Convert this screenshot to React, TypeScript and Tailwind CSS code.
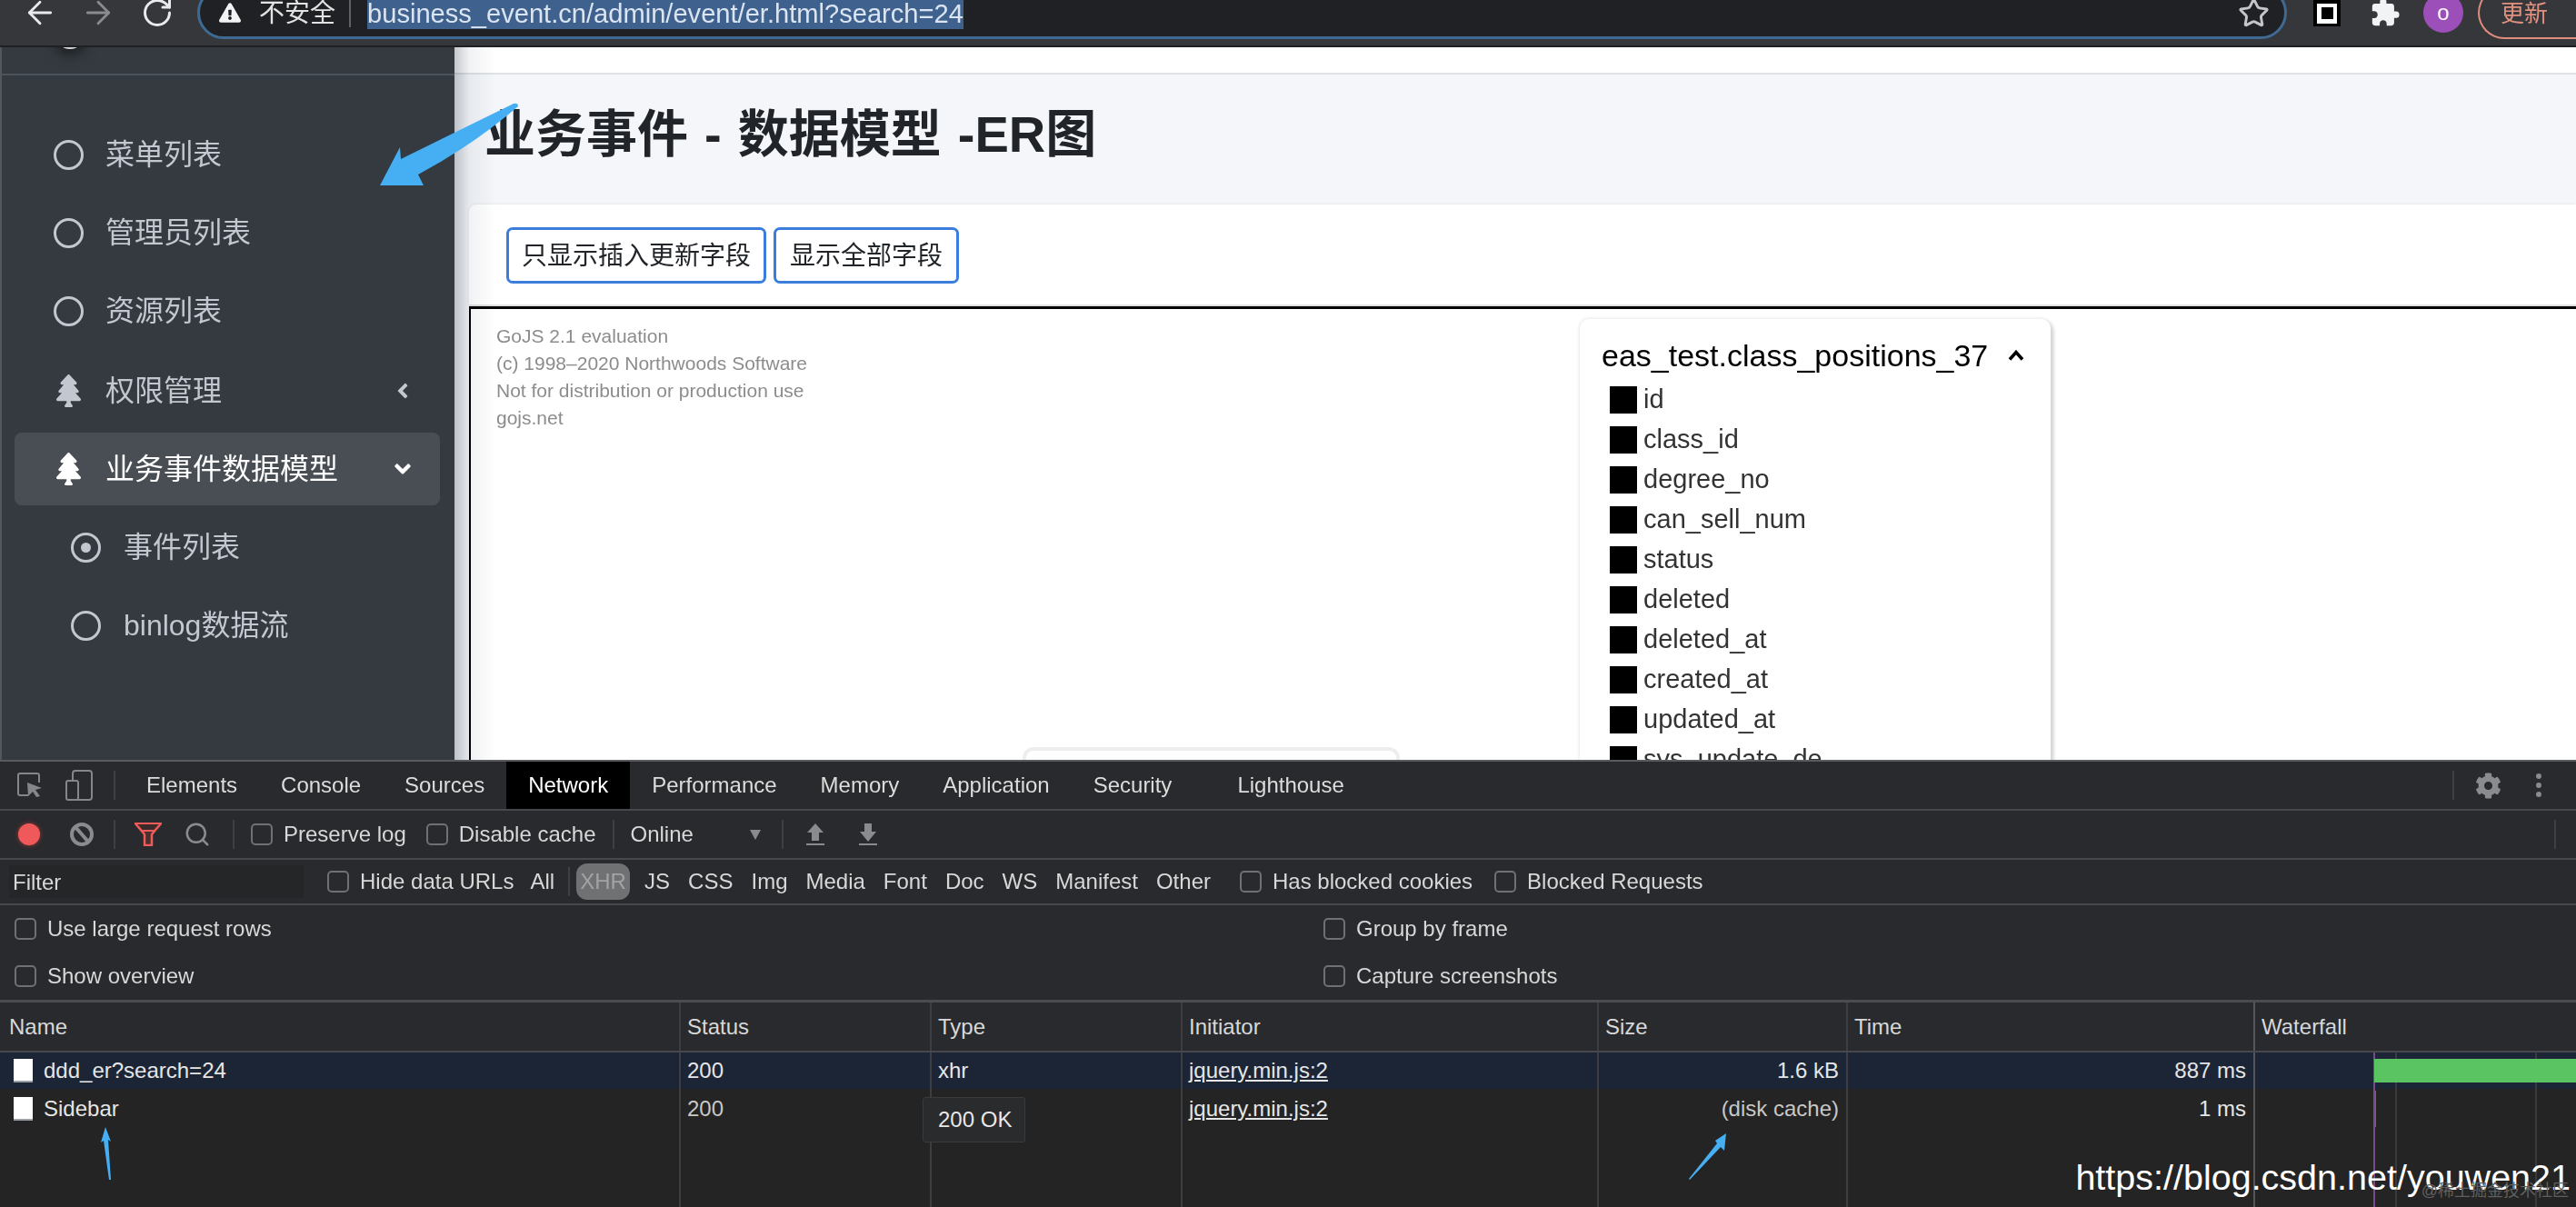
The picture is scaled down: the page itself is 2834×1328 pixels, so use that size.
import { ArrowLeft, ArrowRight, RotateCw, Star, Search } from "lucide-react";
import { FaTree, FaAngleLeft, FaAngleDown, FaCog, FaExclamationTriangle } from "react-icons/fa";
import { MdExtension } from "react-icons/md";

const COLS = "grid grid-cols-[747px_276px_276px_458px_274px_448px_1fr]";
const FIELDS = [
  "id",
  "class_id",
  "degree_no",
  "can_sell_num",
  "status",
  "deleted",
  "deleted_at",
  "created_at",
  "updated_at",
  "sys_update_de",
];

function Ring({ dot }: { dot?: boolean }) {
  return (
    <span className="flex h-[33px] w-[33px] shrink-0 items-center justify-center rounded-full border-[3px] border-[#c2c7d0]">
      {dot && <span className="h-[11px] w-[11px] rounded-full bg-[#c2c7d0]" />}
    </span>
  );
}

function NavItem({ label }: { label: string }) {
  return (
    <div className="mb-[6px] flex h-[80px] items-center gap-[24px] pl-[43px] text-[32px] text-[#c2c7d0]">
      <Ring />
      <span>{label}</span>
    </div>
  );
}

function SubItem({ label, dot }: { label: string; dot?: boolean }) {
  return (
    <div className="mb-[6px] flex h-[80px] items-center gap-[25px] pl-[62px] text-[32px] text-[#c2c7d0]">
      <Ring dot={dot} />
      <span>{label}</span>
    </div>
  );
}

function Sidebar() {
  return (
    <aside className="h-full w-[500px] shrink-0 border-l-2 border-[#55565a] bg-[#343a40]">
      <div className="relative h-[31px] overflow-hidden border-b-2 border-[#4b545c]">
        <div className="absolute left-[58px] top-[-32px] h-[34px] w-[34px] rounded-full bg-[#d8d8d8] shadow-[0_6px_14px_rgba(0,0,0,0.5)]" />
      </div>
      <nav className="ml-[14px] mr-[16px] flex flex-col pt-[47px]">
        <NavItem label="菜单列表" />
        <NavItem label="管理员列表" />
        <NavItem label="资源列表" />
        <div className="mb-[6px] mt-[2px] flex h-[80px] items-center pl-[46px] pr-[33px] text-[32px] text-[#c2c7d0]">
          <FaTree className="h-[36px] w-[27px]" />
          <span className="ml-[27px]">权限管理</span>
          <FaAngleLeft className="ml-auto h-[26px] w-[16px]" />
        </div>
        <div className="mb-[6px] flex h-[80px] items-center rounded-[8px] bg-[#494e54] pl-[46px] pr-[30px] text-[32px] text-white">
          <FaTree className="h-[36px] w-[27px]" />
          <span className="ml-[27px]">业务事件数据模型</span>
          <FaAngleDown className="ml-auto h-[28px] w-[22px]" />
        </div>
        <SubItem label="事件列表" dot />
        <SubItem label="binlog数据流" />
      </nav>
    </aside>
  );
}

function BrowserBar() {
  return (
    <header className="flex h-[52px] items-start border-b-2 border-[#1f2023] bg-[#36373b] text-[#e8eaed]">
      <ArrowLeft className="ml-[24px] mt-[-6px] h-[40px] w-[40px] shrink-0 text-[#e8eaed]" strokeWidth={1.7} />
      <ArrowRight className="ml-[24px] mt-[-6px] h-[40px] w-[40px] shrink-0 text-[#8a8b8e]" strokeWidth={1.7} />
      <RotateCw className="ml-[27px] mt-[-4px] h-[36px] w-[36px] shrink-0 text-[#e8eaed]" strokeWidth={2} />
      <div className="ml-[26px] mt-[-15px] flex h-[58px] w-[2299px] shrink-0 items-center rounded-full border-[3px] border-[#3f6a94] bg-[#202124] pl-[21px] pr-[16px]">
        <FaExclamationTriangle className="h-[24px] w-[24px] text-[#f1f3f4]" />
        <span className="ml-[20px] mt-[2px] text-[28px] text-[#e3e3e3]">不安全</span>
        <span className="ml-[15px] mb-[10px] h-[30px] w-[2px] self-end bg-[#5f6368]" />
        <span className="ml-[18px] h-[44px] self-start bg-[#3f618e] pt-[10px] text-[29.1px] leading-[34px] text-[#dbe5f1]">
          business_event.cn/admin/event/er.html?search=24
        </span>
        <Star className="ml-auto h-[35px] w-[35px] text-[#c4c6c9]" strokeWidth={2} />
      </div>
      <div className="ml-[29px] flex h-[29px] w-[30px] shrink-0 items-center justify-center bg-black">
        <div className="flex h-[22px] w-[22px] items-center justify-center bg-white">
          <div className="h-[13px] w-[13px] bg-black" />
        </div>
      </div>
      <MdExtension className="ml-[32px] mt-[-3px] h-[34px] w-[34px] shrink-0 text-[#f1f3f4]" />
      <div className="ml-[25px] mt-[-8px] flex h-[44px] w-[44px] shrink-0 items-center justify-center rounded-full bg-[#9c4fb8] text-[24px] text-white">
        o
      </div>
      <div className="ml-[16px] mt-[-15px] h-[58px] w-[140px] shrink-0 rounded-l-full border-2 border-r-0 border-[#df8d7c] pl-[23px] pt-[11px] text-[26px] leading-[34px] text-[#e0917f]">
        更新
      </div>
    </header>
  );
}

function Content() {
  return (
    <main className="relative flex h-full min-w-0 flex-1 flex-col bg-[#f4f6f9]">
      <div className="h-[30px] shrink-0 border-b-2 border-[#dee2e6] bg-white" />
      <div className="flex h-[143px] shrink-0 items-start pl-[33px] pt-[37px]">
        <h1 className="text-[56px] font-semibold leading-[58px] text-[#212529] [word-spacing:2.5px]">
          业务事件 - 数据模型 -ER图
        </h1>
      </div>
      <div className="ml-[16px] flex h-[112px] shrink-0 items-start gap-[8px] rounded-tl-[8px] border-b-2 border-[#e0e0e0] bg-white pl-[41px] pt-[25px] shadow-[0_0_3px_rgba(0,0,0,0.1)]">
        <button className="h-[62px] w-[286px] rounded-[7px] border-[3px] border-[#3b7ddb] bg-white pt-[2px] text-[28px] text-[#212529]">
          只显示插入更新字段
        </button>
        <button className="h-[62px] w-[204px] rounded-[7px] border-[3px] border-[#3b7ddb] bg-white pt-[2px] text-[28px] text-[#212529]">
          显示全部字段
        </button>
      </div>
      <section className="relative ml-[16px] min-h-0 flex-1 overflow-hidden border-l-2 border-t-[3px] border-black bg-white">
        <div className="pl-[28px] pt-[15px] text-[21px] leading-[30px] text-[#8c8c8c]">
          <div>GoJS 2.1 evaluation</div>
          <div>(c) 1998–2020 Northwoods Software</div>
          <div>Not for distribution or production use</div>
          <div>gojs.net</div>
        </div>
        <div className="absolute left-[1220px] top-[11px] h-[520px] w-[518px] rounded-[10px] bg-white shadow-[0_0_4px_#dddddd,3px_3px_4px_rgba(0,0,0,0.2)]">
          <div className="flex h-[67px] items-start pl-[24px] pt-[16px]">
            <span className="text-[34px] leading-[48px] text-black">eas_test.class_positions_37</span>
            <svg className="ml-[22px] mt-[18px] h-[12px] w-[18px]" viewBox="0 0 18 12" fill="none">
              <path d="M2 10.5L9 2.5l7 8" stroke="black" strokeWidth="3.5" />
            </svg>
          </div>
          {FIELDS.map((f) => (
            <div key={f} className="flex h-[44px] items-center gap-[7px] pl-[33px] text-[29px] text-[#333333]">
              <span className="h-[30px] w-[30px] bg-black" />
              <span>{f}</span>
            </div>
          ))}
        </div>
        <div className="absolute left-[607px] top-[482px] h-[40px] w-[415px] rounded-[12px] border-4 border-[#eeeeee]" />
      </section>
      <div className="pointer-events-none absolute bottom-0 left-0 top-0 w-[46px] bg-gradient-to-r from-[#c6c8cd] via-[#f1f2f4] via-35% to-transparent mix-blend-multiply" />
    </main>
  );
}

function Check({ label, className }: { label: string; className?: string }) {
  return (
    <span className={`flex items-center gap-[12px] ${className ?? ""}`}>
      <span className="h-[24px] w-[24px] shrink-0 rounded-[5px] border-2 border-[#6f7072]" />
      <span>{label}</span>
    </span>
  );
}

function Sep({ className }: { className?: string }) {
  return <span className={`h-[32px] w-[2px] shrink-0 bg-[#3f4043] ${className ?? ""}`} />;
}

function TabBar() {
  const tabs = ["Elements", "Console", "Sources", "Network", "Performance", "Memory", "Application", "Security"];
  return (
    <div className="flex h-[54px] shrink-0 items-center border-b-2 border-[#47484b]">
      <svg className="ml-[19px] h-[28px] w-[28px] shrink-0" viewBox="0 0 28 28" fill="none">
        <path d="M12 25H3a2 2 0 0 1-2-2V3a2 2 0 0 1 2-2h19a2 2 0 0 1 2 2v8" stroke="#85868a" strokeWidth="2" />
        <path d="M11 11l16 6-7 2 5 7-4 1-4-6-5 5z" fill="#85868a" />
      </svg>
      <svg className="ml-[25px] h-[34px] w-[30px] shrink-0" viewBox="0 0 30 34" fill="none">
        <rect x="8" y="1" width="21" height="32" rx="3" stroke="#85868a" strokeWidth="2" />
        <rect x="1" y="12" width="13" height="21" rx="2" fill="#292a2d" stroke="#85868a" strokeWidth="2" />
      </svg>
      <Sep className="ml-[23px] mr-[10px]" />
      {tabs.map((t) => (
        <span
          key={t}
          className={`flex h-full items-center px-[24px] text-[24px] ${t === "Network" ? "bg-black text-white" : "text-[#dcdcdc]"}`}
        >
          {t}
        </span>
      ))}
      <span className="ml-[24px] flex h-full items-center px-[24px] text-[24px] text-[#dcdcdc]">Lighthouse</span>
      <Sep className="ml-auto" />
      <FaCog className="ml-[23px] h-[29px] w-[29px] text-[#8a8b8e]" />
      <span className="ml-[38px] mr-[38px] flex flex-col gap-[4px]">
        <span className="h-[6px] w-[6px] rounded-full bg-[#8a8b8e]" />
        <span className="h-[6px] w-[6px] rounded-full bg-[#8a8b8e]" />
        <span className="h-[6px] w-[6px] rounded-full bg-[#8a8b8e]" />
      </span>
    </div>
  );
}

function ToolRow() {
  return (
    <div className="flex h-[54px] shrink-0 items-center border-b-2 border-[#47484b] pr-[22px]">
      <span className="ml-[20px] h-[24px] w-[24px] rounded-full bg-[#f0595a] shadow-[0_0_5px_#a03a3a]" />
      <svg className="ml-[33px] h-[26px] w-[26px]" viewBox="0 0 26 26" fill="none">
        <circle cx="13" cy="13" r="11" stroke="#8a8b8e" strokeWidth="4" />
        <path d="M6 5l14 16" stroke="#8a8b8e" strokeWidth="4" />
      </svg>
      <Sep className="ml-[22px]" />
      <svg className="ml-[21px] h-[26px] w-[30px]" viewBox="0 0 30 26">
        <path d="M1 1h28L19 13v12h-8V13z" fill="#4a2f2f" stroke="#ef5a5a" strokeWidth="2.5" strokeLinejoin="round" />
        <path d="M1 1h28l-7 8H8z" fill="#3a2a2a" stroke="#ef5a5a" strokeWidth="2" />
      </svg>
      <Search className="ml-[24px] h-[30px] w-[30px] text-[#8a8b8e]" strokeWidth={2} />
      <Sep className="ml-[24px]" />
      <Check label="Preserve log" className="ml-[18px]" />
      <Check label="Disable cache" className="ml-[22px]" />
      <Sep className="ml-[19px]" />
      <span className="ml-[17px]">Online</span>
      <span className="ml-[62px] h-0 w-0 border-x-[6px] border-t-[11px] border-x-transparent border-t-[#8a8b8e]" />
      <Sep className="ml-[23px]" />
      <svg className="ml-[24px] h-[26px] w-[22px]" viewBox="0 0 22 26">
        <path d="M11 1l9 10h-5v9H7v-9H2z" fill="#8a8b8e" />
        <rect x="1" y="23" width="20" height="2" fill="#8a8b8e" />
      </svg>
      <svg className="ml-[36px] h-[26px] w-[22px]" viewBox="0 0 22 26">
        <path d="M7 1h8v9h5l-9 11L2 10h5z" fill="#8a8b8e" />
        <rect x="1" y="23" width="20" height="2" fill="#8a8b8e" />
      </svg>
      <Sep className="ml-auto" />
    </div>
  );
}

function FilterRow() {
  return (
    <div className="flex h-[50px] shrink-0 items-center border-b-2 border-[#47484b]">
      <div className="ml-[10px] flex h-[36px] w-[324px] items-center bg-[#252628] pl-[4px] pt-[2px]">Filter</div>
      <Check label="Hide data URLs" className="ml-[26px]" />
      <span className="ml-[18px]">All</span>
      <Sep className="ml-[15px]" />
      <span className="ml-[7px] flex h-[40px] w-[59px] items-center justify-center rounded-[12px] bg-[#707172] text-[#a3a3a3]">
        XHR
      </span>
      <span className="ml-[16px] flex gap-[20px]">
        <span>JS</span>
        <span>CSS</span>
        <span>Img</span>
        <span>Media</span>
        <span>Font</span>
        <span>Doc</span>
        <span>WS</span>
        <span>Manifest</span>
        <span>Other</span>
      </span>
      <Check label="Has blocked cookies" className="ml-[32px]" />
      <Check label="Blocked Requests" className="ml-[24px]" />
    </div>
  );
}

function SettingsRows() {
  return (
    <div className="grid h-[107px] shrink-0 grid-cols-[1440px_1fr] grid-rows-[52px_52px] border-b-[3px] border-[#4b4c4f] pl-[16px]">
      <Check label="Use large request rows" />
      <Check label="Group by frame" />
      <Check label="Show overview" />
      <Check label="Capture screenshots" />
    </div>
  );
}

function Cell({ children, className }: { children?: React.ReactNode; className?: string }) {
  return (
    <div className={`flex h-full items-center overflow-hidden border-l-2 border-[#3d3e41] pl-[7px] pr-[8px] ${className ?? ""}`}>
      {children}
    </div>
  );
}

function DocIcon() {
  return <span className="mr-[12px] h-[26px] w-[21px] shrink-0 border-b-2 border-[#9aa0a6] bg-white" />;
}

function NetworkTable() {
  return (
    <div className="relative flex min-h-0 flex-1 flex-col bg-[#242424]">
      <div className={`${COLS} h-[55px] shrink-0 border-b-2 border-[#47484b] bg-[#292a2d]`}>
        <div className="flex items-center pl-[10px]">Name</div>
        <Cell>Status</Cell>
        <Cell>Type</Cell>
        <Cell>Initiator</Cell>
        <Cell>Size</Cell>
        <Cell>Time</Cell>
        <Cell className="border-[#55565a]">Waterfall</Cell>
      </div>
      <div className={`${COLS} h-[40px] shrink-0 bg-[#1b2536] text-[#e6e6e6]`}>
        <div className="flex items-center pl-[15px]">
          <DocIcon />
          ddd_er?search=24
        </div>
        <Cell>200</Cell>
        <Cell>xhr</Cell>
        <Cell className="underline">jquery.min.js:2</Cell>
        <Cell className="justify-end">1.6 kB</Cell>
        <Cell className="justify-end">887 ms</Cell>
        <Cell className="border-[#55565a] !pl-[131px] !pr-0">
          <span className="relative z-10 h-[26px] w-[222px] shrink-0 bg-[#5ac463]" />
        </Cell>
      </div>
      <div className={`${COLS} h-[44px] shrink-0 text-[#e6e6e6]`}>
        <div className="flex items-center pl-[15px]">
          <DocIcon />
          Sidebar
        </div>
        <Cell className="text-[#c8c8c8]">200</Cell>
        <Cell />
        <Cell className="underline">jquery.min.js:2</Cell>
        <Cell className="justify-end text-[#c8c8c8]">(disk cache)</Cell>
        <Cell className="justify-end">1 ms</Cell>
        <Cell className="border-[#55565a] !pl-[131px]">
          <span className="h-[40px] w-[2px] bg-[#4a6fc0]" />
        </Cell>
      </div>
      <div className={`${COLS} min-h-0 flex-1`}>
        <div />
        <Cell />
        <Cell />
        <Cell />
        <Cell />
        <Cell />
        <Cell className="border-[#55565a]" />
      </div>
      <span className="absolute bottom-0 left-[2611px] top-[55px] w-[2px] bg-[#7a4a8c]" />
      <span className="absolute bottom-0 left-[2635px] top-[55px] w-[2px] bg-[#3a3b3e]" />
      <span className="absolute bottom-0 left-[2789px] top-[55px] w-[2px] bg-[#3a3b3e]" />
      <div className="absolute left-[1015px] top-[104px] flex h-[50px] w-[113px] items-center rounded-[3px] border border-[#3a3b3d] bg-[#2a2b2d] pl-[16px] text-[#e8e8e8]">
        200 OK
      </div>
      <div className="absolute right-[6px] top-[169px] text-[39.5px] leading-[46px] text-white">
        https://blog.csdn.net/youwen21
      </div>
      <div className="absolute bottom-[6px] right-[8px] text-[18px] leading-[24px] text-[#5f5f5f]">@稀土掘金技术社区</div>
    </div>
  );
}

function DevTools() {
  return (
    <section className="flex min-h-0 flex-1 flex-col border-t-2 border-[#5a5b5e] bg-[#292a2d] text-[24px] text-[#d8d8d8]">
      <TabBar />
      <ToolRow />
      <FilterRow />
      <SettingsRows />
      <NetworkTable />
    </section>
  );
}

export default function App() {
  return (
    <div className="relative flex h-[1328px] w-[2834px] flex-col overflow-hidden bg-white font-['Liberation_Sans','Noto_Sans_CJK_SC',sans-serif]">
      <BrowserBar />
      <div className="flex h-[784px] shrink-0">
        <Sidebar />
        <Content />
      </div>
      <DevTools />
      <svg className="pointer-events-none absolute inset-0 h-full w-full" viewBox="0 0 2834 1328">
        <path
          d="M565 114L441 175L440 162L418 204L466 204L460 192Q520 160 570 117Q570 113 565 114Z"
          fill="#46aef2"
        />
        <path d="M116 1240L122 1256L119 1254L122 1298L120 1298L114 1255L111 1257Z" fill="#46aef2" />
        <path d="M1899 1247L1897 1266L1893 1262L1859 1298L1858 1297L1889 1258L1887 1255Z" fill="#46aef2" />
      </svg>
    </div>
  );
}
